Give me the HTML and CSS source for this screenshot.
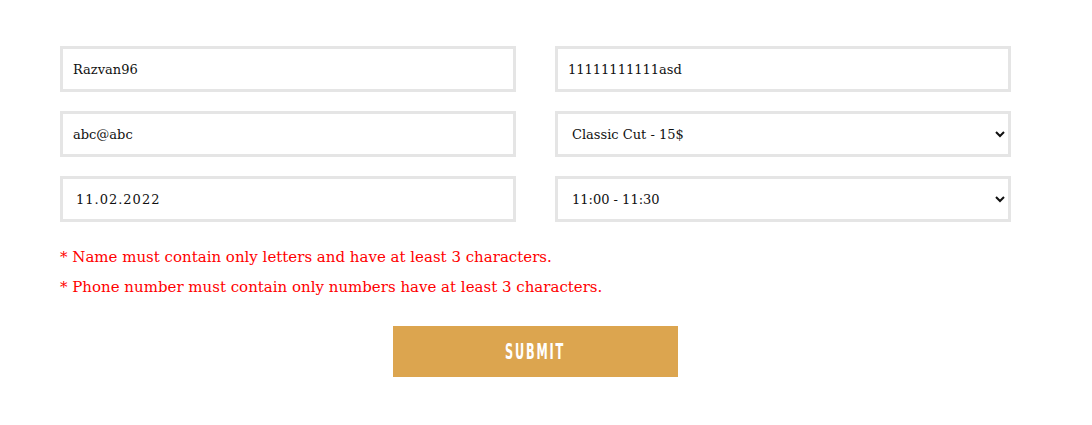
FILE: index.html
```html
<!DOCTYPE html>
<html>
<head>
<meta charset="utf-8">
<link rel="stylesheet" href="styles.css">
</head>
<body>
<form class="booking">
  <div class="grid">
    <input class="field" type="text" value="Razvan96">
    <input class="field" type="text" value="11111111111asd">
    <input class="field" type="text" value="abc@abc">
    <select class="field select"><option>Classic Cut - 15$</option></select>
    <input class="field date" type="text" value="11.02.2022">
    <select class="field select"><option>11:00 - 11:30</option></select>
  </div>
  <div class="errors">
    <p class="error">* Name must contain only letters and have at least 3 characters.</p>
    <p class="error">* Phone number must contain only numbers have at least 3 characters.</p>
  </div>
  <div class="actions">
    <button class="submit" type="button"><span class="submit-label">Submit</span></button>
  </div>
</form>
</body>
</html>
```
FILE: styles.css
```css
html, body { margin: 0; padding: 0; background: #fff; }
body { font-family: "DejaVu Serif", serif; }
.booking {
  width: 951px;
  margin: 0 0 0 60px;
  padding-top: 46px;
}
.grid {
  display: grid;
  grid-template-columns: 456px 456px;
  column-gap: 39px;
  row-gap: 19px;
}
.field {
  box-sizing: border-box;
  height: 46px;
  width: 100%;
  border: 3px solid #e5e5e5;
  background: #fff;
  padding: 0 10px;
  font-family: "DejaVu Serif", serif;
  font-size: 13px;
  color: #111;
  outline: none;
  border-radius: 0;
}
.select { padding-left: 10px; padding-right: 6px; }
.date { padding-left: 13px; letter-spacing: 1px; }
.errors { padding-top: 20px; }
.error {
  margin: 0;
  color: #ff0000;
  font-size: 15px;
  line-height: 30px;
}
.actions {
  display: flex;
  justify-content: center;
  padding-top: 24px;
}
.submit {
  width: 285px;
  height: 51px;
  margin-left: -1px;
  border: none;
  background: #dca54f;
  color: #fff;
  font-family: "DejaVu Sans Condensed", "DejaVu Sans", sans-serif;
  font-weight: bold;
  font-size: 21px;
  text-transform: uppercase;
  padding: 0;
}
.submit-label {
  display: inline-block;
  letter-spacing: 3px;
  transform: scaleX(0.6);
}
```
